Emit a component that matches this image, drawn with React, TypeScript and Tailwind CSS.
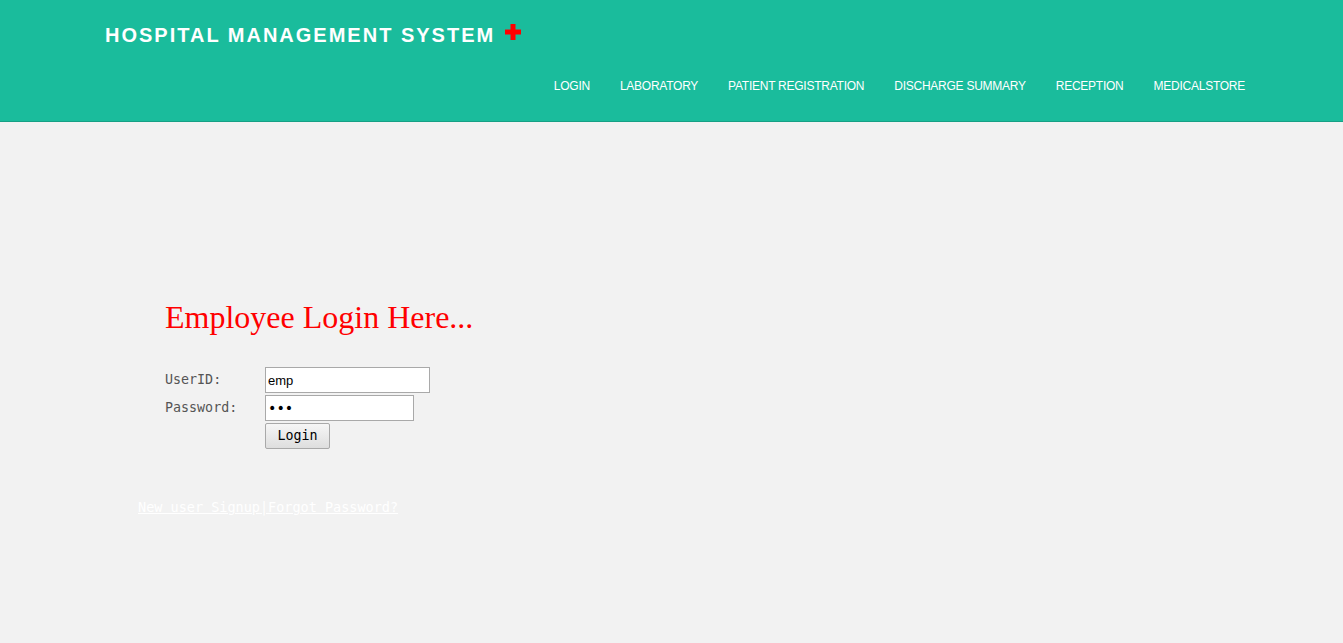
import React from 'react';

const navItems = ['LOGIN', 'LABORATORY', 'PATIENT REGISTRATION', 'DISCHARGE SUMMARY', 'RECEPTION', 'MEDICALSTORE'];

const App: React.FC = () => {
  return (
    <div className="min-h-[643px] bg-[#f2f2f2]">
      {/* Header */}
      <header className="h-[122px] bg-[#1abc9c] border-b border-[#16a085] font-['Liberation_Sans',Arial,sans-serif]">
        <div className="pl-[105px] pt-[22px] flex items-start">
          <h1 className="text-[20px] font-bold tracking-[2px] text-white leading-[26px]">HOSPITAL MANAGEMENT SYSTEM</h1>
          <svg className="ml-[10px] mt-[2px]" width="16" height="16" viewBox="0 0 16 16">
            <rect x="5.5" y="0" width="5" height="16" fill="#ff0000" />
            <rect x="0" y="5.5" width="16" height="5" fill="#ff0000" />
          </svg>
        </div>
        <nav className="flex justify-end pr-[98px] mt-[29px] gap-[30px]">
          {navItems.map((item) => (
            <a key={item} href="#" className="text-white text-[12px] tracking-[-0.25px] leading-[18px]">
              {item}
            </a>
          ))}
        </nav>
      </header>

      {/* Login form */}
      <main className="pt-[175px]">
        <h2 className="pl-[165px] text-[32px] leading-[40px] text-[#ff0000] font-['Liberation_Serif','Times_New_Roman',serif]">
          Employee Login Here...
        </h2>
        <form className="mt-[30px] pl-[165px] font-['DejaVu_Sans_Mono',monospace] text-[13.33px]">
          <div className="flex items-center h-[26px]">
            <label className="w-[100px] text-[#555]">UserID:</label>
            <input
              type="text"
              defaultValue="emp"
              className="w-[165px] h-[26px] bg-white border border-[#a9a9a9] px-[2px] text-[13px] text-black font-['Liberation_Sans',Arial,sans-serif] outline-none"
            />
          </div>
          <div className="flex items-center h-[26px] mt-[2px]">
            <label className="w-[100px] text-[#555]">Password:</label>
            <input
              type="password"
              defaultValue="emp"
              className="w-[149px] h-[26px] bg-white border border-[#a9a9a9] px-[2px] text-[14px] text-black outline-none"
            />
          </div>
          <div className="flex mt-[2px] pl-[100px]">
            <button
              type="button"
              className="w-[65px] h-[26px] border border-[#a9a9a9] rounded-[2px] bg-gradient-to-b from-[#f6f6f6] to-[#dedede] text-black text-[13.33px]"
            >
              Login
            </button>
          </div>
        </form>
        <div className="mt-[49px] pl-[138px] font-['DejaVu_Sans_Mono',monospace] text-[13.5px] text-white leading-[18px]">
          <a href="#" className="underline">New user Signup</a>
          <a href="#" className="underline">|Forgot Password?</a>
        </div>
      </main>
    </div>
  );
};

export default App;
